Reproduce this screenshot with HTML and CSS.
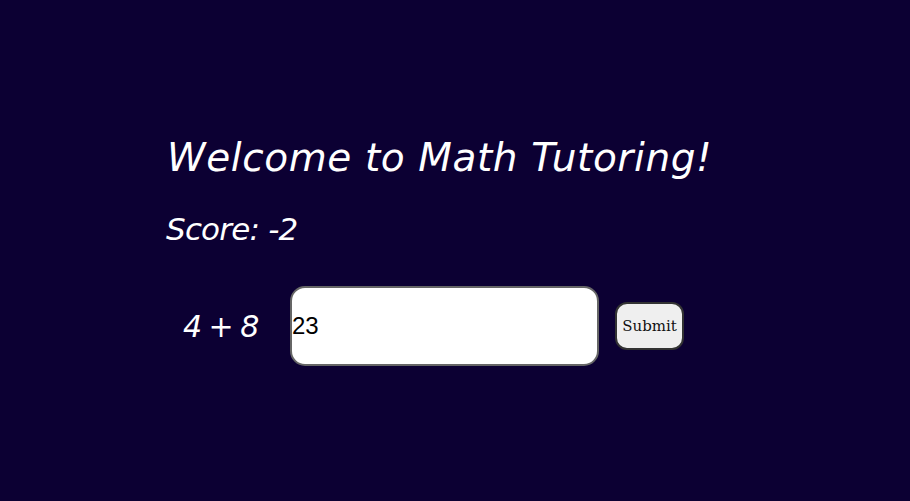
FILE: index.html
```html
<!DOCTYPE html>
<html>
<head>
<meta charset="utf-8">
<link rel="stylesheet" href="styles.css">
</head>
<body>
<main class="app">
  <h1 class="title">Welcome to Math Tutoring!</h1>
  <h2 class="score">Score: -2</h2>
  <div class="problem">
    <span class="question">4 + 8</span>
    <input class="answer" type="text" value="23">
    <button class="submit">Submit</button>
  </div>
</main>
</body>
</html>
```
FILE: styles.css
```css
html, body {
  margin: 0;
  padding: 0;
  background: #0c0033;
  height: 100%;
}
.app {
  padding: 133px 0 0 167px;
  display: flex;
  flex-direction: column;
  color: #fff;
  font-family: "DejaVu Sans", sans-serif;
  font-style: italic;
}
.title {
  margin: 0;
  font-size: 39px;
  font-weight: 300;
  line-height: 50px;
  letter-spacing: 0.6px;
}
.score {
  margin: 26px 0 0 -1px;
  font-size: 31px;
  font-weight: 300;
  line-height: 40px;
  letter-spacing: -0.8px;
}
.problem {
  display: flex;
  align-items: center;
  margin-top: 37px;
}
.question {
  font-size: 30px;
  margin-left: 16px;
  width: 107px;
  word-spacing: -3px;
}
.answer {
  box-sizing: border-box;
  width: 309px;
  height: 80px;
  border: 2px solid #666;
  border-radius: 15px;
  padding: 0;
  font-family: "Liberation Sans", Arial, sans-serif;
  font-size: 24px;
  font-style: normal;
  color: #000;
  background: #fff;
  outline: none;
}
.submit {
  box-sizing: border-box;
  margin-left: 16px;
  width: 69px;
  height: 48px;
  border: 2px solid #333;
  border-radius: 12px;
  background: #efefef;
  font-family: "DejaVu Serif", serif;
  font-size: 15px;
  padding: 0;
  color: #111;
}
```
